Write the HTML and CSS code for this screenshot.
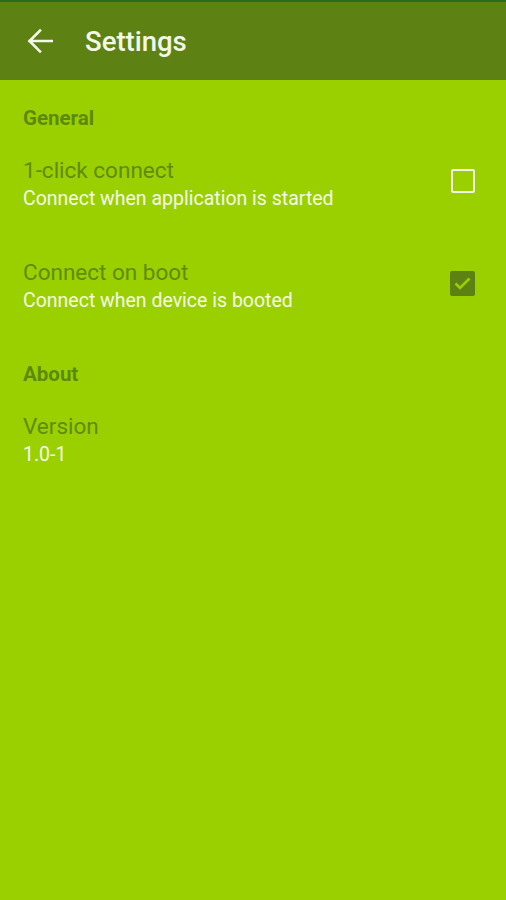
FILE: index.html
```html
<!DOCTYPE html>
<html lang="en">
<head>
  <meta charset="UTF-8" />
  <meta name="viewport" content="width=device-width, initial-scale=1.0"/>
  <title>Settings</title>
  <link rel="stylesheet" href="styles.css">
</head>
<body>
  <header class="toolbar">
    <svg class="back" width="26" height="26" viewBox="0 0 26 26">
      <path d="M25 13H2.5M13 2.5L2.5 13L13 23.5" fill="none" stroke="#f4f8ea" stroke-width="2.6" stroke-linecap="square"/>
    </svg>
    <h1>Settings</h1>
  </header>

  <div class="category">General</div>

  <div class="pref">
    <div class="pref-text">
      <div class="pref-title">1-click connect</div>
      <div class="pref-summary">Connect when application is started</div>
    </div>
    <div class="checkbox"></div>
  </div>

  <div class="pref">
    <div class="pref-text">
      <div class="pref-title">Connect on boot</div>
      <div class="pref-summary">Connect when device is booted</div>
    </div>
    <div class="checkbox checked">
      <svg width="25" height="25" viewBox="0 0 25 25">
        <path d="M5.5 12.5L10 17L19.5 7.5" fill="none" stroke="#9bd000" stroke-width="2.6"/>
      </svg>
    </div>
  </div>

  <div class="category">About</div>

  <div class="pref">
    <div class="pref-text">
      <div class="pref-title">Version</div>
      <div class="pref-summary">1.0-1</div>
    </div>
  </div>
</body>
</html>
```

FILE: styles.css
```css
* {
  margin: 0;
  padding: 0;
  box-sizing: border-box;
}

body {
  font-family: Roboto, 'Noto Sans', sans-serif;
  background: #9bd000;
  min-height: 100vh;
}

.toolbar {
  height: 80px;
  background: #5e8114;
  border-top: 2px solid #2f6b1d;
  display: flex;
  align-items: center;
  padding-left: 27px;
}

.back {
  display: block;
  margin-right: 32px;
}

.toolbar h1 {
  font-size: 27.5px;
  font-weight: 500;
  color: #f2f7e6;
}

.category {
  padding: 26px 23px 2px;
  font-size: 20.5px;
  line-height: 24px;
  font-weight: 700;
  color: #5c8a08;
}

.pref {
  display: flex;
  align-items: center;
  padding: 24px 31px 23px 23px;
}

.pref-text {
  flex: 1;
}

.pref-title {
  font-size: 22.5px;
  line-height: 28px;
  color: #5f8c0c;
}

.pref-summary {
  margin-top: 3px;
  font-size: 19.5px;
  line-height: 24px;
  color: #f4f9e8;
}

.checkbox {
  width: 24px;
  height: 24px;
  margin-bottom: 5px;
  border: 2.5px solid #f4f9e8;
  border-radius: 2px;
}

.checkbox.checked {
  width: 25px;
  height: 25px;
  border: none;
  background: #5e8114;
}

.checkbox svg {
  display: block;
}
```
